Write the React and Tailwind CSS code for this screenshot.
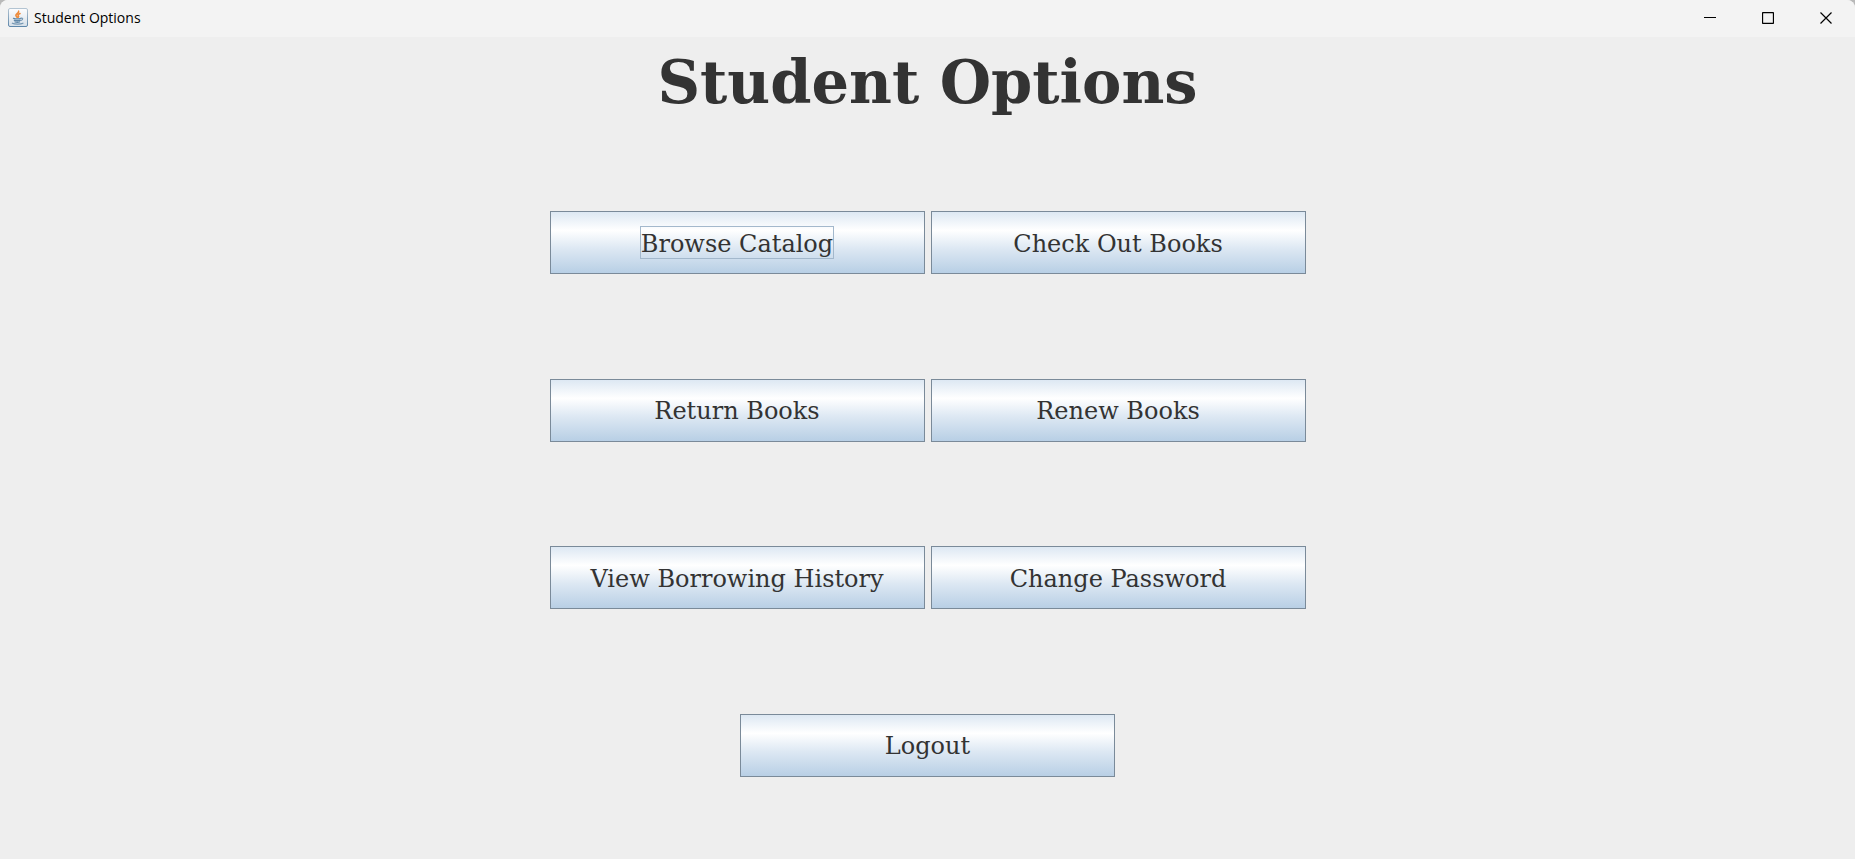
const rows = [
  ["Browse Catalog", "Check Out Books"],
  ["Return Books", "Renew Books"],
  ["View Borrowing History", "Change Password"],
  ["Logout"],
];

function JavaIcon() {
  return (
    <svg width="20" height="20" viewBox="0 0 20 20" aria-hidden="true">
      <defs>
        <linearGradient id="tile" x1="0" y1="0" x2="0" y2="1">
          <stop offset="0" stopColor="#fdfdfe" />
          <stop offset="1" stopColor="#d5dfe8" />
        </linearGradient>
        <linearGradient id="edge" x1="0" y1="0" x2="0" y2="1">
          <stop offset="0" stopColor="#b3c4d2" />
          <stop offset="1" stopColor="#5e87aa" />
        </linearGradient>
      </defs>
      <rect x="0.5" y="0.5" width="19" height="18" rx="1.5" fill="url(#tile)" stroke="url(#edge)" />
      <path d="M10.6 3.2c.8 1.8-3 2.5-2.7 4.2.1.8.8 1.2 1.2 1.8M12 5.5c-1.8.7-2.4 1.4-1.700 2.2.5.6.4 1.1-.2 1.6" fill="none" stroke="#ee8a3a" strokeWidth="1.6" strokeLinecap="round" />
      <path d="M5.5 10.3c2 .6 5.500.6 7.500 0M6.300 12.300c1.700.5 4.300.5 6 0M7 14c1.300.4 3.300.4 4.600 0" fill="none" stroke="#5f87a8" strokeWidth="1.3" strokeLinecap="round" />
      <path d="M13 10.2c2.300-.6 2.300 1.600 0 2.300M4.300 15.200c2 1.200 8.500 1.200 10.700 0" fill="none" stroke="#7597b3" strokeWidth="1.1" strokeLinecap="round" />
    </svg>
  );
}

function WindowButton({ label, children }) {
  return (
    <button type="button" aria-label={label} className="flex w-[58px] items-center justify-center">
      <svg width="12" height="12" viewBox="0 0 12 12" fill="none" stroke="#000" aria-hidden="true">
        {children}
      </svg>
    </button>
  );
}

function MenuButton({ label, focused }) {
  return (
    <button
      type="button"
      className="flex h-[63px] w-[375px] items-center justify-center border border-[#7a8a99] bg-[linear-gradient(to_bottom,#dde8f3_0%,#ffffff_30%,#dde8f3_60%,#b8cfe5_100%)] p-0"
    >
      <span
        className={
          focused
            ? "flex h-[33px] items-center border border-[#a3b8cc] pt-0.5 text-2xl"
            : "flex h-[33px] items-center pt-0.5 text-2xl"
        }
      >
        {label}
      </span>
    </button>
  );
}

export default function App() {
  return (
    <div className="bg-[#b9b9b9]">
      <div className="flex min-h-screen flex-col overflow-hidden rounded-t-lg bg-[#eeeeee] text-[#333333]">
        <header className="flex h-[37px] justify-between bg-[#f3f3f3] pb-px">
          <div className="flex items-center gap-1.5 pl-2 font-['Open_Sans',sans-serif] text-sm text-black">
            <JavaIcon />
            <span>Student Options</span>
          </div>
          <div className="flex">
            <WindowButton label="Minimize">
              <path d="M0 5.5h12" />
            </WindowButton>
            <WindowButton label="Maximize">
              <rect x="0.5" y="0.5" width="11" height="11" rx="1" strokeWidth="1.3" />
            </WindowButton>
            <WindowButton label="Close">
              <path d="M0.5 0.5l11 11M11.5 0.5l-11 11" strokeWidth="1.2" />
            </WindowButton>
          </div>
        </header>
        <main className="flex flex-1 flex-col font-['Bookman_Old_Style','DejaVu_Serif',serif]">
          <h1 className="pt-2.5 text-center text-[59px] leading-[72px] font-bold">Student Options</h1>
          <nav aria-label="Student options" className="flex flex-1 flex-col justify-between gap-6 pt-[92px] pb-[82px]">
            {rows.map((row) => (
              <div key={row[0]} className="flex justify-center gap-1.5">
                {row.map((label) => (
                  <MenuButton key={label} label={label} focused={label === "Browse Catalog"} />
                ))}
              </div>
            ))}
          </nav>
        </main>
      </div>
    </div>
  );
}
